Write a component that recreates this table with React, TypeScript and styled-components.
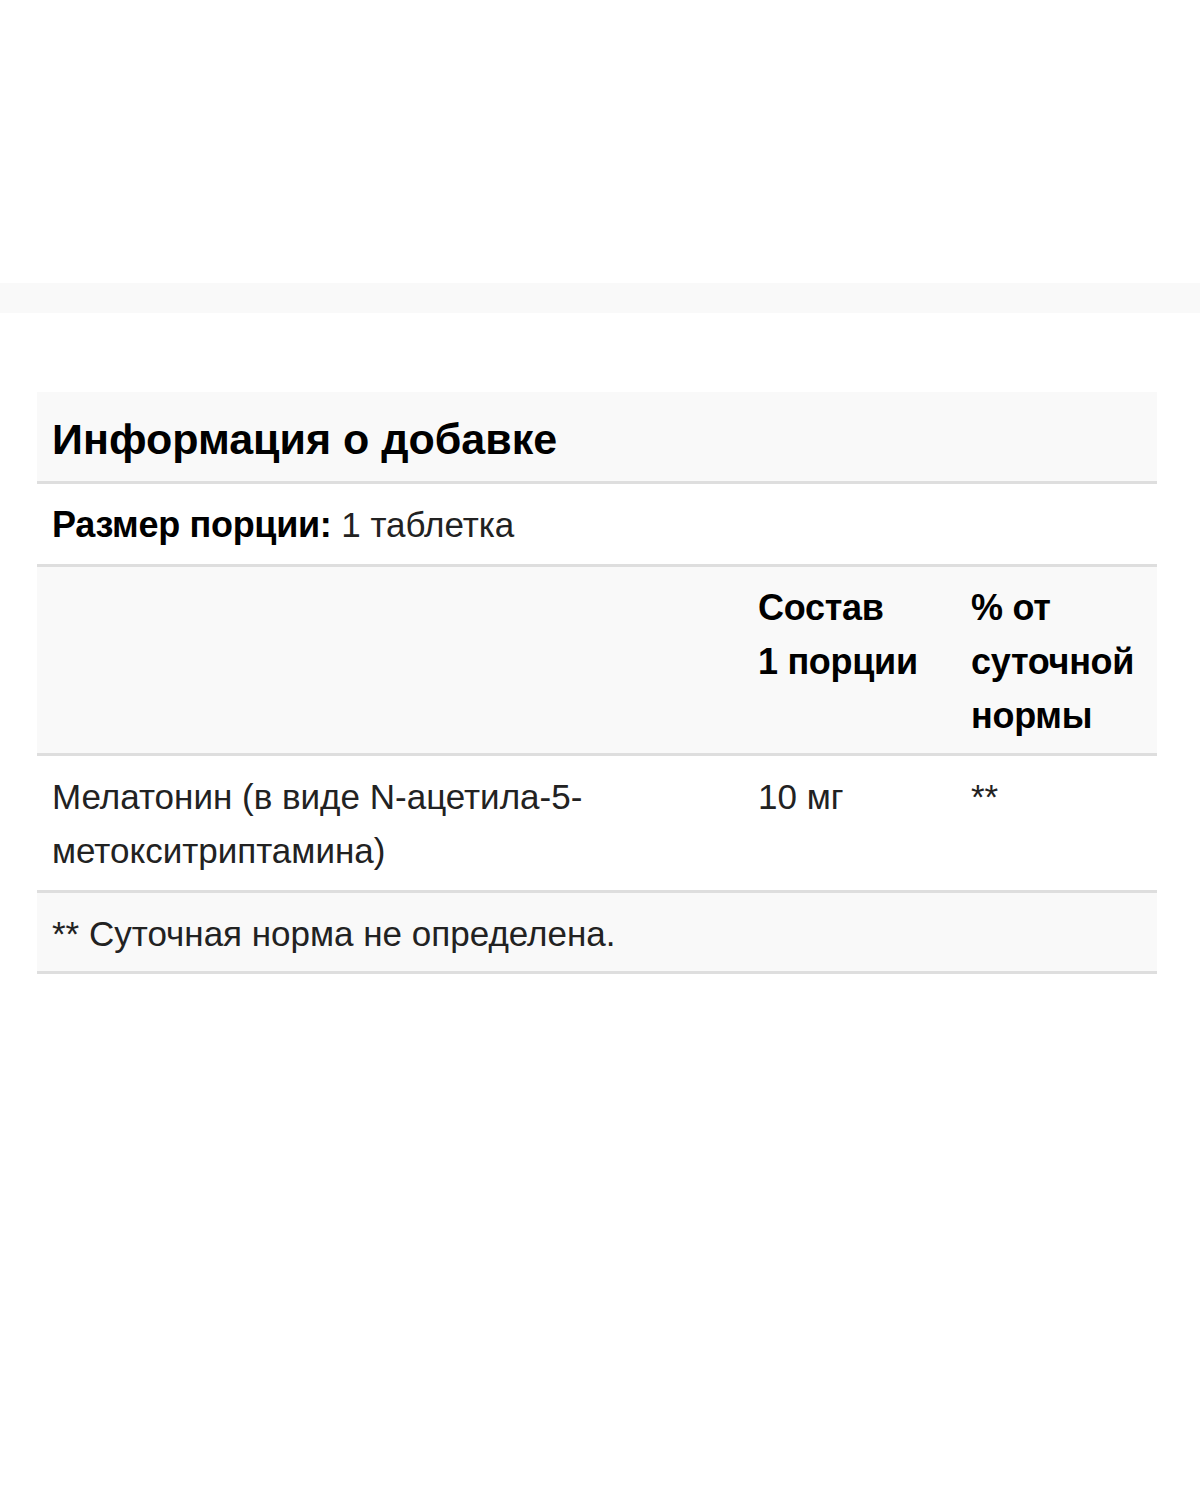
import styled, { createGlobalStyle } from 'styled-components';

const GlobalStyle = createGlobalStyle`
  body {
    margin: 0;
    background: #ffffff;
    font-family: 'Liberation Sans', Arial, sans-serif;
    color: #1a1a1a;
  }
`;

const Page = styled.div`
  width: 1200px;
  height: 1500px;
  padding-top: 283px;
  box-sizing: border-box;
`;

const Band = styled.div`
  height: 30px;
  background: #f9f9f9;
`;

const Panel = styled.section`
  margin: 79px 43px 0 37px;
`;

const Row = styled.div<{ $shaded?: boolean; $height: number }>`
  display: grid;
  grid-template-columns: 706px 213px 1fr;
  min-height: ${({ $height }) => $height}px;
  box-sizing: border-box;
  background: ${({ $shaded }) => ($shaded ? '#f9f9f9' : '#ffffff')};
  border-bottom: 3px solid #dedede;
`;

const Title = styled.h2`
  grid-column: 1 / -1;
  margin: 0;
  padding: 23px 15px 0;
  font-size: 43px;
  font-weight: 700;
  color: #000;
`;

const Cell = styled.div<{ $bold?: boolean; $span?: boolean }>`
  grid-column: ${({ $span }) => ($span ? '1 / -1' : 'auto')};
  padding: 14px 15px 0;
  font-size: ${({ $bold }) => ($bold ? 36 : 35)}px;
  line-height: 54px;
  font-weight: ${({ $bold }) => ($bold ? 700 : 400)};
  color: ${({ $bold }) => ($bold ? '#000' : '#222')};
  letter-spacing: ${({ $bold }) => ($bold ? '-0.3px' : '0')};
`;

const Plain = styled.span`
  font-size: 35px;
  font-weight: 400;
  color: #222;
  letter-spacing: 0;
`;

export default function App() {
  return (
    <>
      <GlobalStyle />
      <Page>
        <Band />
        <Panel>
          <Row $shaded $height={92}>
            <Title>Информация о добавке</Title>
          </Row>
          <Row $height={83}>
            <Cell $bold $span>
              Размер порции: <Plain>1 таблетка</Plain>
            </Cell>
          </Row>
          <Row $shaded $height={189}>
            <Cell />
            <Cell $bold>
              Состав
              <br />1 порции
            </Cell>
            <Cell $bold>
              % от
              <br />
              суточной
              <br />
              нормы
            </Cell>
          </Row>
          <Row $height={137}>
            <Cell>Мелатонин (в виде N-ацетила-5-метокситриптамина)</Cell>
            <Cell>10 мг</Cell>
            <Cell>**</Cell>
          </Row>
          <Row $shaded $height={81}>
            <Cell $span>** Суточная норма не определена.</Cell>
          </Row>
        </Panel>
      </Page>
    </>
  );
}
